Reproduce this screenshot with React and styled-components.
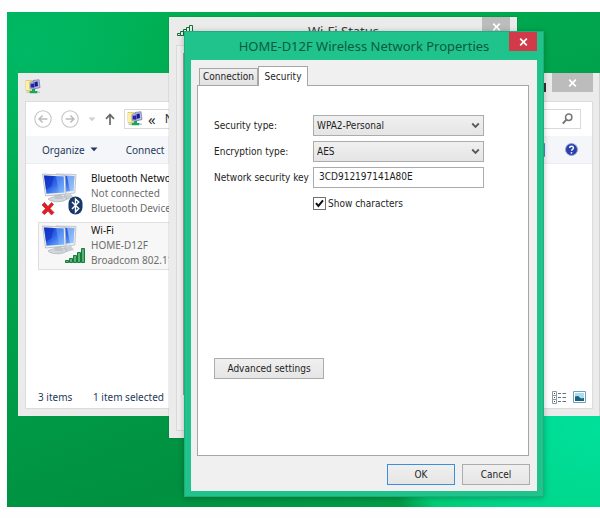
import React, { useState } from 'react';
import styled, { createGlobalStyle } from 'styled-components';

const GlobalStyle = createGlobalStyle`
  * {
    box-sizing: border-box;
  }

  body {
    margin: 0;
    background: #fefefe;
    font-family: 'Noto Sans', 'Open Sans', sans-serif;
    font-size: 10px;
    color: #1e1e1e;
  }

  button,
  input,
  select {
    font: inherit;
    color: inherit;
    margin: 0;
  }

  svg {
    flex: none;
  }
`;

const Page = styled.main`
  height: 100vh;
  padding: 12px 0 11px 7px;
`;

const Desktop = styled.div`
  position: relative;
  height: 100%;
  overflow: hidden;
  background:
    radial-gradient(ellipse 230px 150px at 100% 84%, #00e09a 0%, #00d78c 60%, #00cc74 88%, rgba(0, 190, 90, 0) 100%),
    radial-gradient(ellipse 150px 160px at 4% 8%, rgba(0, 186, 106, 0.8), rgba(0, 180, 80, 0)),
    linear-gradient(160deg, #00b253 0%, #00a04a 45%, #009040 75%, #00a548 100%);
`;

// windows are stacked freely on the desktop
const Window = styled.section`
  position: absolute;
  display: flex;
  flex-direction: column;
  padding: 0 7px 7px;
  background: #ebebeb;
  border-right: ${props => (props.$edge ? '1px solid #d2d2d2' : '0')};
`;

const ExplorerWindow = styled(Window)`
  inset: 61px 0 91px 11px;
  padding-right: 6px;
`;

const StatusWindow = styled(Window)`
  inset: 5px 83px 69px 162px;
  box-shadow: 0 0 1px rgba(0, 0, 0, 0.4);
`;

const DialogWindow = styled(Window)`
  inset: 19px 56px 10px 177px;
  padding: 0 6px 5px;
  background: #20c38c;
  border: 1px solid #1cae7c;
  box-shadow: 0 1px 6px rgba(0, 0, 0, 0.25);
`;

const TitleBar = styled.header`
  display: flex;
  flex: none;
  align-items: center;
  height: 28px;
`;

const Title = styled.h1`
  flex: 1;
  margin: 0;
  padding-left: ${props => props.$indent || '0'};
  font-size: 13px;
  font-weight: 400;
  line-height: 28px;
  text-align: center;
  white-space: nowrap;
  color: ${props => props.$color || '#3a3a3a'};
`;

const CloseButton = styled.button`
  display: flex;
  align-items: center;
  justify-content: center;
  align-self: flex-start;
  width: ${props => props.$width || '28px'};
  height: 19px;
  padding: 0;
  border: 0;
  background: ${props => (props.$active ? '#d23a4a' : '#bcbcbc')};
`;

const CaptionButton = styled.button`
  display: flex;
  align-items: center;
  width: 18px;
  height: 20px;
  padding: 0;
  border: 0;
  background: none;
`;

const Spacer = styled.span`
  flex: 1;
`;

const ExplorerBody = styled.div`
  display: flex;
  flex: 1;
  flex-direction: column;
  min-height: 0;
  border: 1px solid #dcdcdc;
  background: #fff;
`;

const AddressRow = styled.nav`
  display: flex;
  align-items: center;
  gap: 9px;
  height: 34px;
  padding: 0 11px 0 8px;
`;

const IconButton = styled.button`
  display: flex;
  flex: none;
  padding: 0;
  border: 0;
  background: none;
`;

const AddressBox = styled.div`
  display: flex;
  flex: 1;
  align-items: center;
  gap: 5px;
  height: 20px;
  padding-left: 2px;
  border: 1px solid #d9d9d9;
  color: #333;
`;

const Crumb = styled.span`
  padding-right: ${props => (props.$root ? '4px' : '0')};
  font-size: ${props => (props.$root ? '15px' : '12px')};
  line-height: 16px;
`;

const SearchBox = styled.div`
  display: flex;
  align-items: center;
  width: 90px;
  height: 20px;
  padding-right: 7px;
  border: 1px solid #d9d9d9;
`;

const SearchInput = styled.input`
  flex: 1;
  min-width: 0;
  height: 16px;
  padding: 0;
  border: 0;
  outline: 0;
`;

const CommandBar = styled.div`
  display: flex;
  align-items: center;
  gap: 28px;
  height: 28px;
  padding: 0 14px 0 16px;
  border-bottom: 1px solid #ecedef;
  background: #f4f6f9;
  color: #1e395b;
`;

const CommandButton = styled.button`
  display: flex;
  align-items: center;
  gap: 5px;
  padding: 0;
  border: 0;
  background: none;
  white-space: nowrap;
`;

const CommandIcons = styled.div`
  display: flex;
  align-items: center;
  gap: 20px;
`;

const AdapterList = styled.ul`
  display: flex;
  flex: 1;
  flex-direction: column;
  gap: 4px;
  margin: 0;
  padding: 6px 12px;
  list-style: none;
`;

const AdapterItem = styled.li`
  display: flex;
  gap: 5px;
  width: 144px;
  height: 48px;
  padding: 0 3px;
  border: 1px solid ${props => (props.$selected ? '#dedede' : 'transparent')};
  background: ${props => (props.$selected ? '#f7f7f7' : 'transparent')};
`;

const AdapterText = styled.div`
  display: flex;
  flex-direction: column;
  line-height: 15px;
  white-space: nowrap;
  color: #6d6d6d;
`;

const AdapterName = styled.span`
  color: #111;
`;

const StatusBar = styled.footer`
  display: flex;
  align-items: center;
  height: 22px;
  padding: 0 6px 0 12px;
  color: #1e395b;
`;

const StatusText = styled.span`
  width: ${props => props.$width || 'auto'};
  white-space: nowrap;
`;

const StatusIcons = styled.div`
  display: flex;
  align-items: center;
  gap: 7px;
`;

const StatusBody = styled.div`
  flex: 1;
  padding: 7px 6px 35px;
  border: 1px solid #dadada;
  background: #f0f0f0;
`;

const StatusPanel = styled.div`
  height: 100%;
  border: 1px solid #a0a0a0;
  background: #fff;
`;

const DialogBody = styled.form`
  display: flex;
  flex: 1;
  flex-direction: column;
  min-height: 0;
  padding: 6px 8px 6px 6px;
  background: #f0f0f0;
  font-family: 'DejaVu Sans Condensed', 'DejaVu Sans', sans-serif;
`;

const TabList = styled.div`
  display: flex;
  align-items: flex-end;
  height: 19px;
  padding-left: 2px;
`;

const Tab = styled.button`
  position: relative;
  width: ${props => props.$width};
  height: ${props => (props.$active ? '20px' : '17px')};
  margin-bottom: ${props => (props.$active ? '-1px' : '0')};
  padding: 0;
  border: 1px solid #a6a6a6;
  border-bottom: 0;
  background: ${props => (props.$active ? '#fff' : 'linear-gradient(#f0f0f0, #e2e2e2)')};
  line-height: 16px;
  white-space: nowrap;
`;

const TabPanel = styled.div`
  display: flex;
  flex: 1;
  flex-direction: column;
  align-items: flex-start;
  min-height: 0;
  padding: 29px 44px 76px 16px;
  border: 1px solid #a6a6a6;
  background: #fff;
`;

const Fields = styled.div`
  display: grid;
  grid-template-columns: 99px 1fr;
  row-gap: 5px;
  align-items: center;
  width: 100%;
`;

const FieldLabel = styled.label`
  white-space: nowrap;
`;

const SelectBox = styled.span`
  display: grid;
  grid-template-columns: 1fr 13px;
  align-items: center;

  select {
    grid-area: 1 / 1 / 2 / 3;
    appearance: none;
    height: 21px;
    padding: 0 20px 0 3px;
    border: 1px solid #acacac;
    border-radius: 0;
    background: linear-gradient(#f0f0f0, #e5e5e5);
  }

  svg {
    grid-area: 1 / 2;
    pointer-events: none;
  }
`;

const KeyInput = styled.input`
  width: 100%;
  height: 21px;
  padding: 0 5px 2px;
  border: 1px solid #ababab;
  outline: 0;
  background: #fff;
`;

const CheckLabel = styled.label`
  display: flex;
  grid-column: 2;
  align-items: center;
  gap: 2px;
  padding-top: 4px;
`;

const Checkbox = styled.input`
  appearance: none;
  width: 13px;
  height: 13px;
  border: 1px solid #707070;
  background: #fff;

  &:checked {
    background: #fff url("data:image/svg+xml,%3Csvg xmlns='http://www.w3.org/2000/svg' viewBox='0 0 11 11'%3E%3Cpath d='M2 5.2 4.4 8 9 2.4' fill='none' stroke='%23111' stroke-width='2'/%3E%3C/svg%3E");
  }
`;

const PushButton = styled.button`
  width: ${props => props.$width || '68px'};
  height: 21px;
  padding: 0;
  border: 1px solid ${props => (props.$primary ? '#3c8fdc' : '#acacac')};
  background: linear-gradient(#f0f0f0, #e5e5e5);
  line-height: 17px;
  white-space: nowrap;
`;

const DialogButtons = styled.div`
  display: flex;
  justify-content: flex-end;
  gap: 7px;
  margin-right: -1px;
  padding-top: 8px;
`;

const Cross = () => (
  <svg width="9" height="8" viewBox="0 0 9 8">
    <path d="M1.2 .7 7.8 7.3M7.8 .7 1.2 7.3" stroke="#fff" strokeWidth="1.7" />
  </svg>
);

const Chevron = () => (
  <svg width="9" height="7" viewBox="0 0 9 7">
    <path d="M1.2 1.5 4.5 4.9 7.8 1.5" fill="none" stroke="#5a5a5a" strokeWidth="1.8" />
  </svg>
);

const NetworkFolderIcon = () => (
  <svg width="16" height="16" viewBox="0 0 16 16">
    <path d="M1 1.5h6v10H1z" fill="#f4e27c" stroke="#d9bf55" strokeWidth=".7" />
    <path d="M1 2h3v9H1z" fill="#fbf1ad" />
    <path d="M5 3.5 10 1.5V10L5 9.5z" fill="#bfc9e6" stroke="#7c86b8" strokeWidth=".6" />
    <path d="M8 1.5 14 .7l1 7.8-6 1.6z" fill="#b7bfdd" stroke="#6c73a4" strokeWidth=".7" />
    <path d="M9.5 3 12.6 2.5l.4 4.5-3.5 1z" fill="#1b189c" />
    <path d="M5.6 4.6h3.5v4H5.6z" fill="#2522ad" />
    <path d="M7 10h3v2h2.5v2.3h-8V12H7z" fill="#16a65c" />
    <path d="M1.5 13.2h3M12.5 13.2H15" stroke="#b9c9c4" strokeWidth="1.5" />
  </svg>
);

const ArrowCircle = ({ flip }) => (
  <svg width="18" height="18" viewBox="0 0 18 18">
    <circle cx="9" cy="9" r="8.2" fill="#fff" stroke="#c4c4c4" strokeWidth="1.1" />
    <path
      d={flip ? 'M4.6 9h8.2M9.4 5.5 12.9 9l-3.5 3.5' : 'M13.4 9H5.2M8.6 5.5 5.1 9l3.5 3.5'}
      fill="none"
      stroke="#bcbcbc"
      strokeWidth="1.6"
    />
  </svg>
);

const Caret = ({ color }) => (
  <svg width="8" height="5" viewBox="0 0 8 5">
    <path d="M.5 .5h7L4 4.3z" fill={color} />
  </svg>
);

const UpArrow = () => (
  <svg width="10" height="12" viewBox="0 0 10 12">
    <path d="M5 12V1.8M1 5.8 5 1.6l4 4.2" fill="none" stroke="#6a6a6a" strokeWidth="1.7" />
  </svg>
);

const Magnifier = () => (
  <svg width="11" height="12" viewBox="0 0 11 12">
    <circle cx="6.7" cy="4.2" r="3.2" fill="none" stroke="#777" strokeWidth="1.5" />
    <path d="M4.4 6.6.8 10.6" stroke="#777" strokeWidth="2" />
  </svg>
);

const HelpIcon = () => (
  <svg width="13" height="13" viewBox="0 0 13 13">
    <circle cx="6.5" cy="6.5" r="6" fill="#2a41ad" stroke="#96a4d6" />
    <path d="M4.6 5C4.7 2.6 8.6 2.7 8.4 5 8.3 6.3 6.6 6.4 6.5 7.8" fill="none" stroke="#fff" strokeWidth="1.4" />
    <circle cx="6.5" cy="9.8" r=".9" fill="#fff" />
  </svg>
);

const PreviewPaneIcon = () => (
  <svg width="15" height="14" viewBox="0 0 15 14">
    <path d="M.5 .5h14v13H.5z" fill="#fff" stroke="#4a8bc4" />
    <path d="M8 1h6v12H8z" fill="#5db1ec" />
  </svg>
);

const SignalBars = () => (
  <svg width="17" height="12" viewBox="0 0 17 12">
    <path
      d="M1.5 8.5h3v2h-3zM4.5 6.5h3v4h-3zM7.5 4.5h3v6h-3zM10.5 2.5h3v8h-3zM13.5 .5h3v10h-3z"
      fill="#e6f5ea"
      stroke="#1b6b3c"
    />
  </svg>
);

// two overlapping screens, with the state of the adapter drawn on top
const AdapterIcon = ({ kind }) => (
  <svg width="44" height="46" viewBox="0 0 44 46">
    <defs>
      <linearGradient id={`screen-${kind}`} x1="0" y1="0" x2="1" y2="1">
        <stop offset="0" stopColor="#1339cc" />
        <stop offset=".5" stopColor="#2f66ea" />
        <stop offset="1" stopColor="#8cc4fb" />
      </linearGradient>
    </defs>
    <path d="M21 24l8-1 3 4-8 2z" fill="#c9ced3" />
    <path d="M14 3 34 3.5 32.8 22 16 24z" fill="#eceff2" stroke="#b5bcc4" strokeWidth=".8" />
    <path d="M16 4.6 32.4 5 31.4 19.8 18 21.5z" fill={`url(#screen-${kind})`} />
    <path d="M25 5 32.4 5 31.4 19.8 28 20.2z" fill="#a9d2fb" opacity=".65" />
    <path d="M6 28c4-3 16-4 19-1 0 4-15 5.500-19 1z" fill="#d3d7db" stroke="#9fa6ad" strokeWidth=".6" />
    <path d="M12 22h7l2 6h-8z" fill="#bfc5cb" />
    <path d="M.6 3 23 4.200 24 23 3.500 25z" fill="#f1f3f5" stroke="#aeb5bd" strokeWidth=".8" />
    <path d="M2 4.400 21.600 5.500 22.400 21.400 4.500 22.800z" fill={`url(#screen-${kind})`} />
    <path d="M2 4.400 12 5 9.500 15 4 19z" fill="#0b29b8" opacity=".55" />
    <path d="M14 5.100 21.600 5.500 22.400 21.400 17 21.800z" fill="#7cb4fa" opacity=".45" />
    {kind === 'bluetooth' ? (
      <>
        <path
          d="M0 34 2.5 31.5 6 35.5 9.5 31.5l2 2-3.5 4L12 41.5l-2.5 2.5L6 40 2.5 43.5 0 41.5l3.5-4z"
          fill="#e01e25"
          stroke="#b11218"
          strokeWidth=".6"
        />
        <rect x="26.5" y="25.5" width="14" height="18" rx="7" fill="#173868" />
        <path d="M30 31l6.8 6.5-3.3 3.5V28l3.3 3L30 38" fill="none" stroke="#fff" strokeWidth="1.4" />
      </>
    ) : (
      <path
        d="M23.5 37.5h3v2h-3zM27.5 35.5h3v4h-3zM31.5 32.5h3v7h-3zM35.5 29.5h3v10h-3zM39.5 25.5h3v14h-3z"
        fill="#56b374"
        stroke="#157a3b"
      />
    )}
  </svg>
);

const DetailsIcon = () => (
  <svg width="14" height="13" viewBox="0 0 14 13">
    <path d="M.5 .5h4v4h-4zM.5 4.5h4v4h-4zM.5 8.5h4v4h-4z" fill="#fff" stroke="#8c98a1" />
    <path d="M2 2.5h1M2 6.5h1M2 10.5h1" stroke="#3a4c5a" />
    <path d="M6 2.5h3M10.5 2.5H14M6 6.5h3M10.5 6.5H14M6 10.5h3M10.5 10.5H14" stroke="#5f6f7c" />
  </svg>
);

const ThumbnailIcon = () => (
  <svg width="13" height="12" viewBox="0 0 13 12">
    <path d="M.5 .5h12v11H.5z" fill="#fff" stroke="#6fa3bd" />
    <path d="M2 2h9v8H2z" fill="#a8dcee" />
    <path d="M2 5.5 5 5l3 2.5L11 7v3H2z" fill="#19617c" />
  </svg>
);

const adapters = [
  { kind: 'bluetooth', name: 'Bluetooth Network', state: 'Not connected', device: 'Bluetooth Device' },
  { kind: 'wifi', name: 'Wi-Fi', state: 'HOME-D12F', device: 'Broadcom 802.11', selected: true },
];

const NetworkConnections = () => (
  <ExplorerWindow $edge aria-label="Network Connections">
    <TitleBar>
      <NetworkFolderIcon />
      <Spacer />
      <CaptionButton type="button" aria-label="Maximize">
        <svg width="12" height="9" viewBox="0 0 12 9">
          <path d="M1 1h10v7H1z" fill="none" stroke="#333" strokeWidth="2" />
        </svg>
      </CaptionButton>
      <CloseButton type="button" $width="41px" aria-label="Close">
        <Cross />
      </CloseButton>
    </TitleBar>
    <ExplorerBody>
      <AddressRow>
        <IconButton type="button" aria-label="Back"><ArrowCircle /></IconButton>
        <IconButton type="button" aria-label="Forward"><ArrowCircle flip /></IconButton>
        <IconButton type="button" aria-label="Recent locations"><Caret color="#cfcfcf" /></IconButton>
        <IconButton type="button" aria-label="Up"><UpArrow /></IconButton>
        <AddressBox>
          <NetworkFolderIcon />
          <Crumb $root>«</Crumb>
          <Crumb>Network</Crumb>
        </AddressBox>
        <SearchBox>
          <SearchInput type="search" aria-label="Search" />
          <Magnifier />
        </SearchBox>
      </AddressRow>
      <CommandBar>
        <CommandButton type="button">
          Organize
          <Caret color="#1e395b" />
        </CommandButton>
        <CommandButton type="button">Connect</CommandButton>
        <Spacer />
        <CommandIcons>
          <IconButton type="button" aria-label="Preview pane"><PreviewPaneIcon /></IconButton>
          <IconButton type="button" aria-label="Help"><HelpIcon /></IconButton>
        </CommandIcons>
      </CommandBar>
      <AdapterList>
        {adapters.map(item => (
          <AdapterItem key={item.kind} $selected={item.selected}>
            <AdapterIcon kind={item.kind} />
            <AdapterText>
              <AdapterName>{item.name}</AdapterName>
              <span>{item.state}</span>
              <span>{item.device}</span>
            </AdapterText>
          </AdapterItem>
        ))}
      </AdapterList>
      <StatusBar>
        <StatusText $width="55px">3 items</StatusText>
        <StatusText>1 item selected</StatusText>
        <Spacer />
        <StatusIcons>
          <IconButton type="button" aria-label="Details"><DetailsIcon /></IconButton>
          <IconButton type="button" aria-label="Thumbnails"><ThumbnailIcon /></IconButton>
        </StatusIcons>
      </StatusBar>
    </ExplorerBody>
  </ExplorerWindow>
);

const WifiStatus = () => (
  <StatusWindow aria-label="Wi-Fi Status">
    <TitleBar>
      <SignalBars />
      <Title $indent="12px">Wi-Fi Status</Title>
      <CloseButton type="button" aria-label="Close">
        <Cross />
      </CloseButton>
    </TitleBar>
    <StatusBody>
      <StatusPanel />
    </StatusBody>
  </StatusWindow>
);

const WirelessProperties = () => {
  const [tab, setTab] = useState('Security');
  const [visible, setVisible] = useState(true);
  const [networkKey, setNetworkKey] = useState('3CD912197141A80E');

  return (
    <DialogWindow role="dialog" aria-labelledby="dialog-title">
      <TitleBar>
        <Title id="dialog-title" $indent="28px" $color="#0c5a42">
          HOME-D12F Wireless Network Properties
        </Title>
        <CloseButton type="button" $active aria-label="Close">
          <Cross />
        </CloseButton>
      </TitleBar>
      <DialogBody onSubmit={e => e.preventDefault()}>
        <TabList role="tablist">
          {[['Connection', '59px'], ['Security', '50px']].map(([name, width]) => (
            <Tab
              key={name}
              type="button"
              role="tab"
              aria-selected={tab === name}
              $active={tab === name}
              $width={width}
              onClick={() => setTab(name)}
            >
              {name}
            </Tab>
          ))}
        </TabList>
        <TabPanel role="tabpanel" aria-label={tab}>
          {tab === 'Security' && (
            <>
              <Fields>
                <FieldLabel htmlFor="security-type">Security type:</FieldLabel>
                <SelectBox>
                  <select id="security-type" defaultValue="WPA2-Personal">
                    <option>WPA2-Personal</option>
                    <option>WPA2-Enterprise</option>
                  </select>
                  <Chevron />
                </SelectBox>
                <FieldLabel htmlFor="encryption-type">Encryption type:</FieldLabel>
                <SelectBox>
                  <select id="encryption-type" defaultValue="AES">
                    <option>AES</option>
                    <option>TKIP</option>
                  </select>
                  <Chevron />
                </SelectBox>
                <FieldLabel htmlFor="network-key">Network security key</FieldLabel>
                <KeyInput
                  id="network-key"
                  type={visible ? 'text' : 'password'}
                  value={networkKey}
                  onChange={e => setNetworkKey(e.target.value)}
                />
                <CheckLabel>
                  <Checkbox type="checkbox" checked={visible} onChange={e => setVisible(e.target.checked)} />
                  Show characters
                </CheckLabel>
              </Fields>
              <Spacer />
              <PushButton type="button" $width="110px">Advanced settings</PushButton>
            </>
          )}
        </TabPanel>
        <DialogButtons>
          <PushButton type="submit" $primary>OK</PushButton>
          <PushButton type="button">Cancel</PushButton>
        </DialogButtons>
      </DialogBody>
    </DialogWindow>
  );
};

const App = () => (
  <>
    <GlobalStyle />
    <Page>
      <Desktop>
        <NetworkConnections />
        <WifiStatus />
        <WirelessProperties />
      </Desktop>
    </Page>
  </>
);

export default App;
